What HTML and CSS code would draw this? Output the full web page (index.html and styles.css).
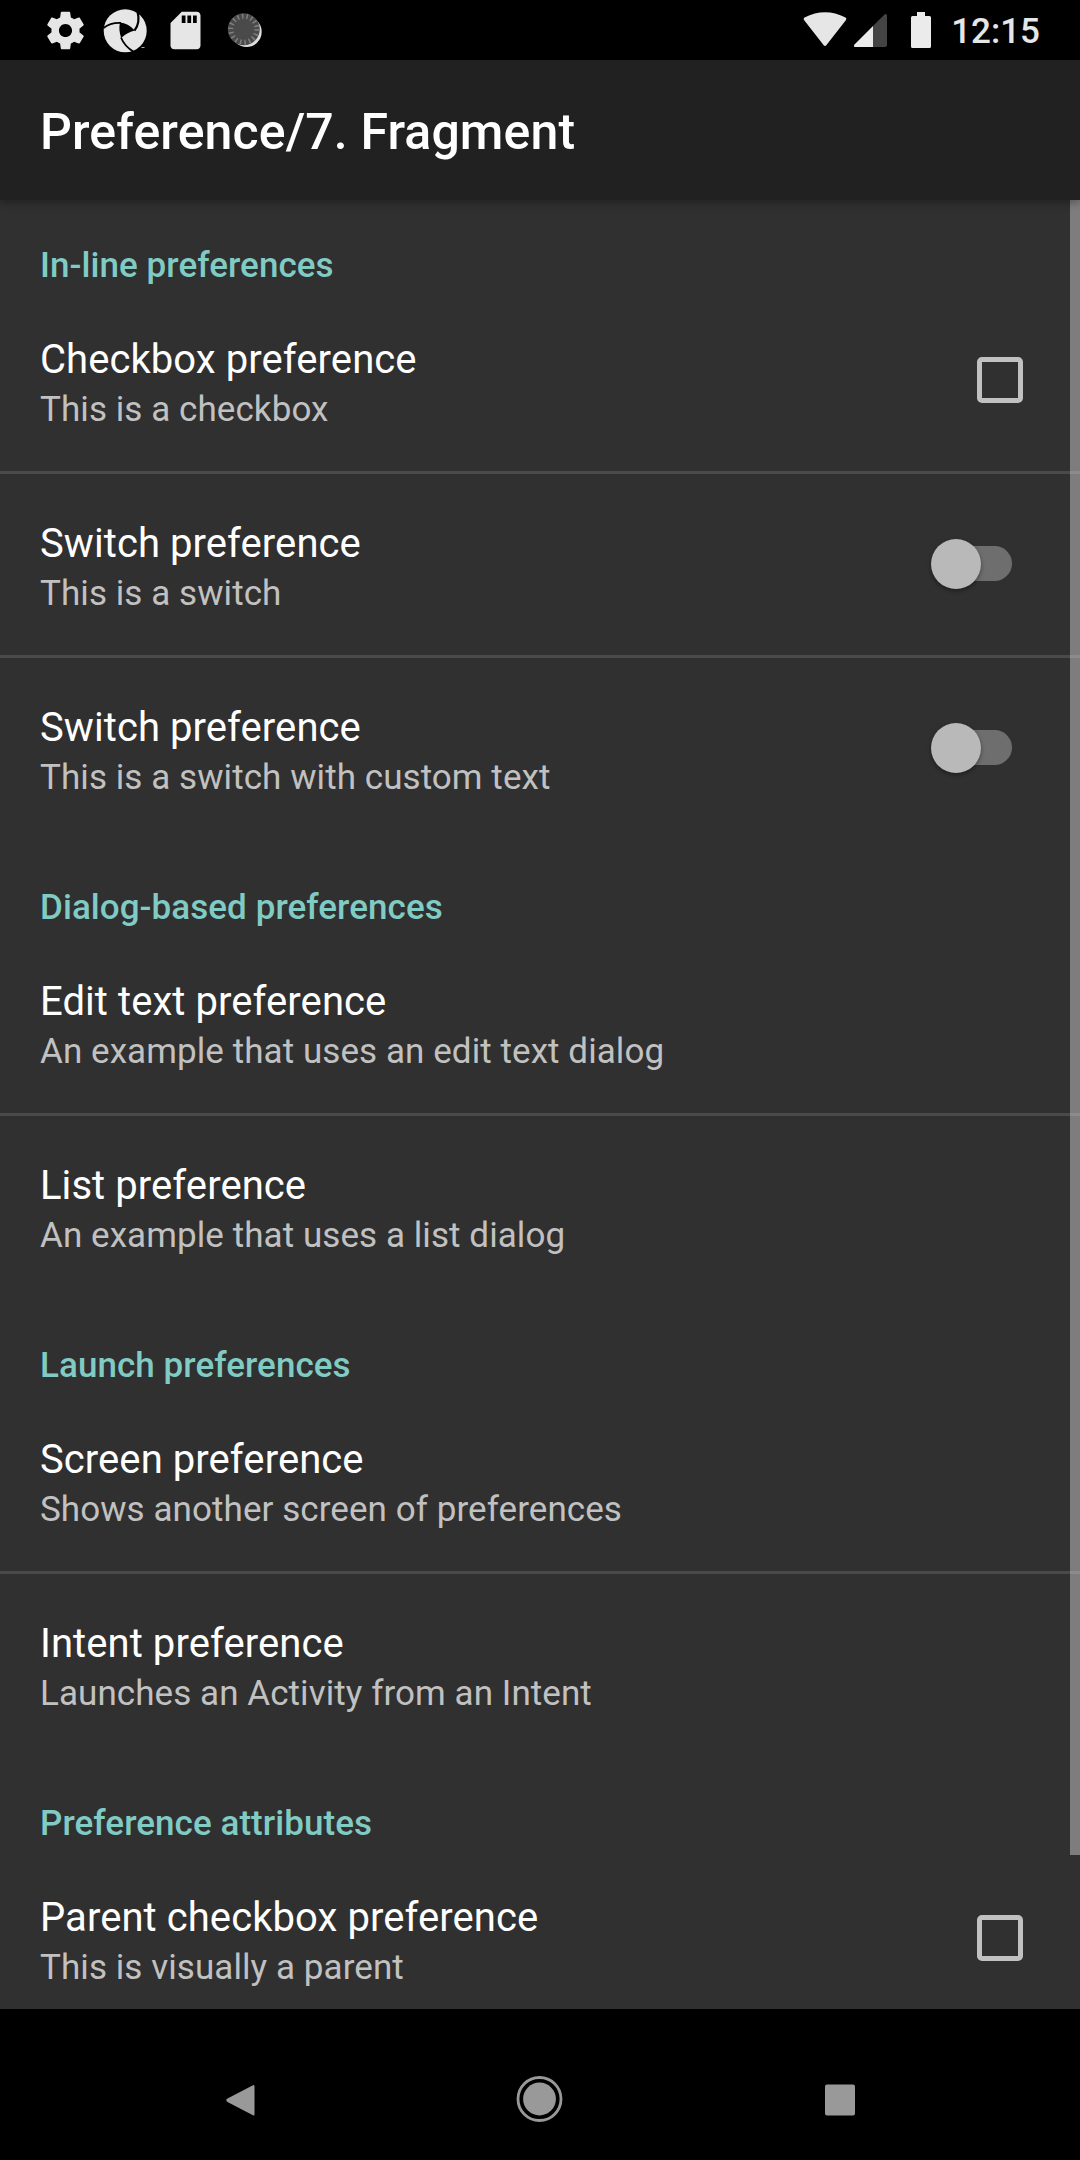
FILE: index.html
```html
<!DOCTYPE html>
<html lang="en">
<head>
<meta charset="utf-8">
<title>Preference/7. Fragment</title>
<link rel="stylesheet" href="styles.css">
</head>
<body>
<div class="screen">
  <header class="status">
    <div class="notifications">
      <svg class="glyph" viewBox="0 0 24 24"><path fill="#e6e6e6" d="M19.43 12.98c.04-.32.07-.64.07-.98s-.03-.66-.07-.98l2.11-1.65c.19-.15.24-.42.12-.64l-2-3.46c-.12-.22-.39-.3-.61-.22l-2.49 1c-.52-.4-1.08-.73-1.69-.98l-.38-2.65C14.46 2.18 14.25 2 14 2h-4c-.25 0-.46.18-.49.42l-.38 2.65c-.61.25-1.17.59-1.69.98l-2.49-1c-.23-.09-.49 0-.61.22l-2 3.46c-.13.22-.07.49.12.64l2.11 1.65c-.04.32-.07.65-.07.98s.03.66.07.98l-2.11 1.65c-.19.15-.24.42-.12.64l2 3.46c.12.22.39.3.61.22l2.49-1c.52.4 1.08.73 1.69.98l.38 2.65c.03.24.24.42.49.42h4c.25 0 .46-.18.49-.42l.38-2.65c.61-.25 1.17-.59 1.69-.98l2.49 1c.23.09.49 0 .61-.22l2-3.46c.12-.22.07-.49-.12-.64l-2.11-1.65zM12 15.5c-1.93 0-3.5-1.57-3.5-3.5s1.57-3.5 3.5-3.5 3.500 1.570 3.500 3.500-1.570 3.500-3.500 3.500z"/></svg>
      <svg class="glyph" viewBox="102.5 7.5 45 45">
        <circle cx="124.700" cy="30.300" r="21.500" fill="#e6e6e6"/>
        <path d="M119.500 22Q127.500 22.500 134.300 30Q126 32 120.700 37.500Q117.800 29 119.500 22Z"/>
        <g fill="none" stroke="#000"><path stroke-width="1.800" d="M103 27.500Q110 22 120.500 22.500"/><path stroke-width="2.200" d="M134 30Q140 22.500 137 11"/><path stroke-width="1.800" d="M120.500 37Q124 46 133.500 51.500"/></g>
        <path fill="#aaa" d="M141 46.500h3v1h-3z"/>
      </svg>
      <svg class="glyph" viewBox="0 0 24 24"><path fill="#e6e6e6" d="M18 2h-8L4.020 8 4 20c0 1.100.900 2 2 2h12c1.100 0 2-.900 2-2V4c0-1.100-.900-2-2-2zm-6 6h-2V4h2v4zm3 0h-2V4h2v4zm3 0h-2V4h2v4z"/></svg>
      <svg class="glyph" viewBox="222.500 7.500 45 45">
        <circle cx="246" cy="31.300" r="15.200" fill="#dedede"/>
        <circle cx="243.300" cy="28.800" r="16" fill="#4a4a4a"/>
        <circle cx="243.300" cy="28.800" r="13" fill="none" stroke="#808080" stroke-width="5" stroke-dasharray="1.500 3.038"/>
      </svg>
    </div>
    <div class="system">
      <svg class="radios" viewBox="802 0 132 60">
        <path fill="#e6e6e6" d="M804 20Q803 18.500 804.500 17.500Q825 7 845.500 17.500Q847 18.500 846 20L826.500 45Q825 47 823.500 45Z"/>
        <path fill="#444" d="M873 26L884.500 14.500Q887 13 887 16V45Q887 47 885 47H873Z"/>
        <path fill="#ebebeb" d="M873 26V47H855Q853 46.500 854.500 44.500Z"/>
        <path fill="#ebebeb" d="M917 12H925V16H929.500Q931 16 931 17.500V46.500Q931 48 929.500 48H912.500Q911 48 911 46.500V17.500Q911 16 912.500 16H917Z"/>
      </svg>
      <span class="clock">12:15</span>
    </div>
  </header>
  <div class="appbar"><h1 class="heading">Preference/7. Fragment</h1></div>
  <main class="list">
    <h2 class="category">In-line preferences</h2>
    <section class="row ruled"><div><div class="title">Checkbox preference</div><div class="summary">This is a checkbox</div></div><span class="checkbox"></span></section>
    <section class="row ruled"><div><div class="title">Switch preference</div><div class="summary">This is a switch</div></div><span class="switch"><i class="thumb"></i></span></section>
    <section class="row"><div><div class="title">Switch preference</div><div class="summary">This is a switch with custom text</div></div><span class="switch"><i class="thumb"></i></span></section>
    <h2 class="category">Dialog-based preferences</h2>
    <section class="row ruled"><div><div class="title">Edit text preference</div><div class="summary">An example that uses an edit text dialog</div></div></section>
    <section class="row"><div><div class="title">List preference</div><div class="summary">An example that uses a list dialog</div></div></section>
    <h2 class="category">Launch preferences</h2>
    <section class="row ruled"><div><div class="title">Screen preference</div><div class="summary">Shows another screen of preferences</div></div></section>
    <section class="row"><div><div class="title">Intent preference</div><div class="summary">Launches an Activity from an Intent</div></div></section>
    <h2 class="category">Preference attributes</h2>
    <section class="row"><div><div class="title">Parent checkbox preference</div><div class="summary">This is visually a parent</div></div><span class="checkbox"></span></section>
    <div class="scrollbar"></div>
  </main>
  <nav class="navbar">
    <svg class="navicon" viewBox="0 0 60 60"><path fill="#999" d="M42.500 15.500Q44.500 14 44.500 16.500V44Q44.500 46.500 42.500 45L17.500 32Q15 30 17.500 28.500Z"/></svg>
    <svg class="navicon" viewBox="0 0 60 60"><circle cx="29.500" cy="29" r="21.500" fill="none" stroke="#999" stroke-width="2.800"/><circle cx="29.500" cy="29" r="16.400" fill="#999"/></svg>
    <svg class="navicon" viewBox="0 0 60 60"><rect x="15" y="14.500" width="30" height="31" rx="2" fill="#999"/></svg>
  </nav>
</div>
</body>
</html>
```
FILE: styles.css
```css
* { box-sizing: border-box; }
body { margin: 0; background: #000; font-family: Roboto, "Liberation Sans", sans-serif; }
.screen { width: 1080px; height: 2160px; display: flex; flex-direction: column; overflow: hidden; background: #000; }
.status { height: 60px; flex: none; display: flex; justify-content: space-between; padding: 0 40px 0 42.5px; }
.notifications { display: flex; align-items: center; gap: 15px; }
.glyph { width: 45px; height: 45px; display: block; }
.system { display: flex; gap: 17px; }
.radios { width: 132px; height: 60px; display: block; }
.clock { color: #e6e6e6; font-size: 35px; font-weight: 500; line-height: 41px; padding-top: 11px; }
.appbar { position: relative; z-index: 1; height: 140px; flex: none; background: #212121; padding: 0 40px; box-shadow: 0 3px 8px rgba(0, 0, 0, .3); }
.heading { margin: 0; padding-top: 43px; color: #fff; font-size: 50px; font-weight: 500; line-height: 58px; letter-spacing: .12px; }
.list { position: relative; height: 1809px; flex: none; overflow: hidden; background: #303030; }
.category { margin: 0; height: 90px; padding: 45px 40px 0; color: #80cbc4; font-size: 35px; font-weight: 500; line-height: 41px; letter-spacing: .06px; }
.row { height: 184px; padding: 43px 40px 0; border-bottom: 3px solid transparent; display: flex; justify-content: space-between; }
.ruled { border-bottom-color: #4a4a4a; }
.title { color: #fff; font-size: 40px; line-height: 53px; letter-spacing: .07px; }
.summary { color: #c1c1c1; font-size: 35px; line-height: 47px; letter-spacing: .07px; }
.checkbox { width: 46px; height: 46px; margin: 24px 17px 0 0; border: 5px solid #c1c1c1; border-radius: 5px; }
.switch { width: 81px; height: 35px; margin: 29px 28px 0 0; border-radius: 18px; background: linear-gradient(90deg, transparent 30px, #6e6e6e 30px); }
.thumb { display: block; width: 50px; height: 50px; margin-top: -7px; border-radius: 50%; background: #b9b9b9; box-shadow: 0 2px 4px rgba(0, 0, 0, .4); }
.scrollbar { position: absolute; top: 0; right: 0; width: 10px; height: 1655px; background: rgba(215, 215, 215, .46); }
.navbar { flex: 1; display: flex; justify-content: space-between; padding: 61px 210px 0; }
.navicon { width: 60px; height: 60px; display: block; }
```
